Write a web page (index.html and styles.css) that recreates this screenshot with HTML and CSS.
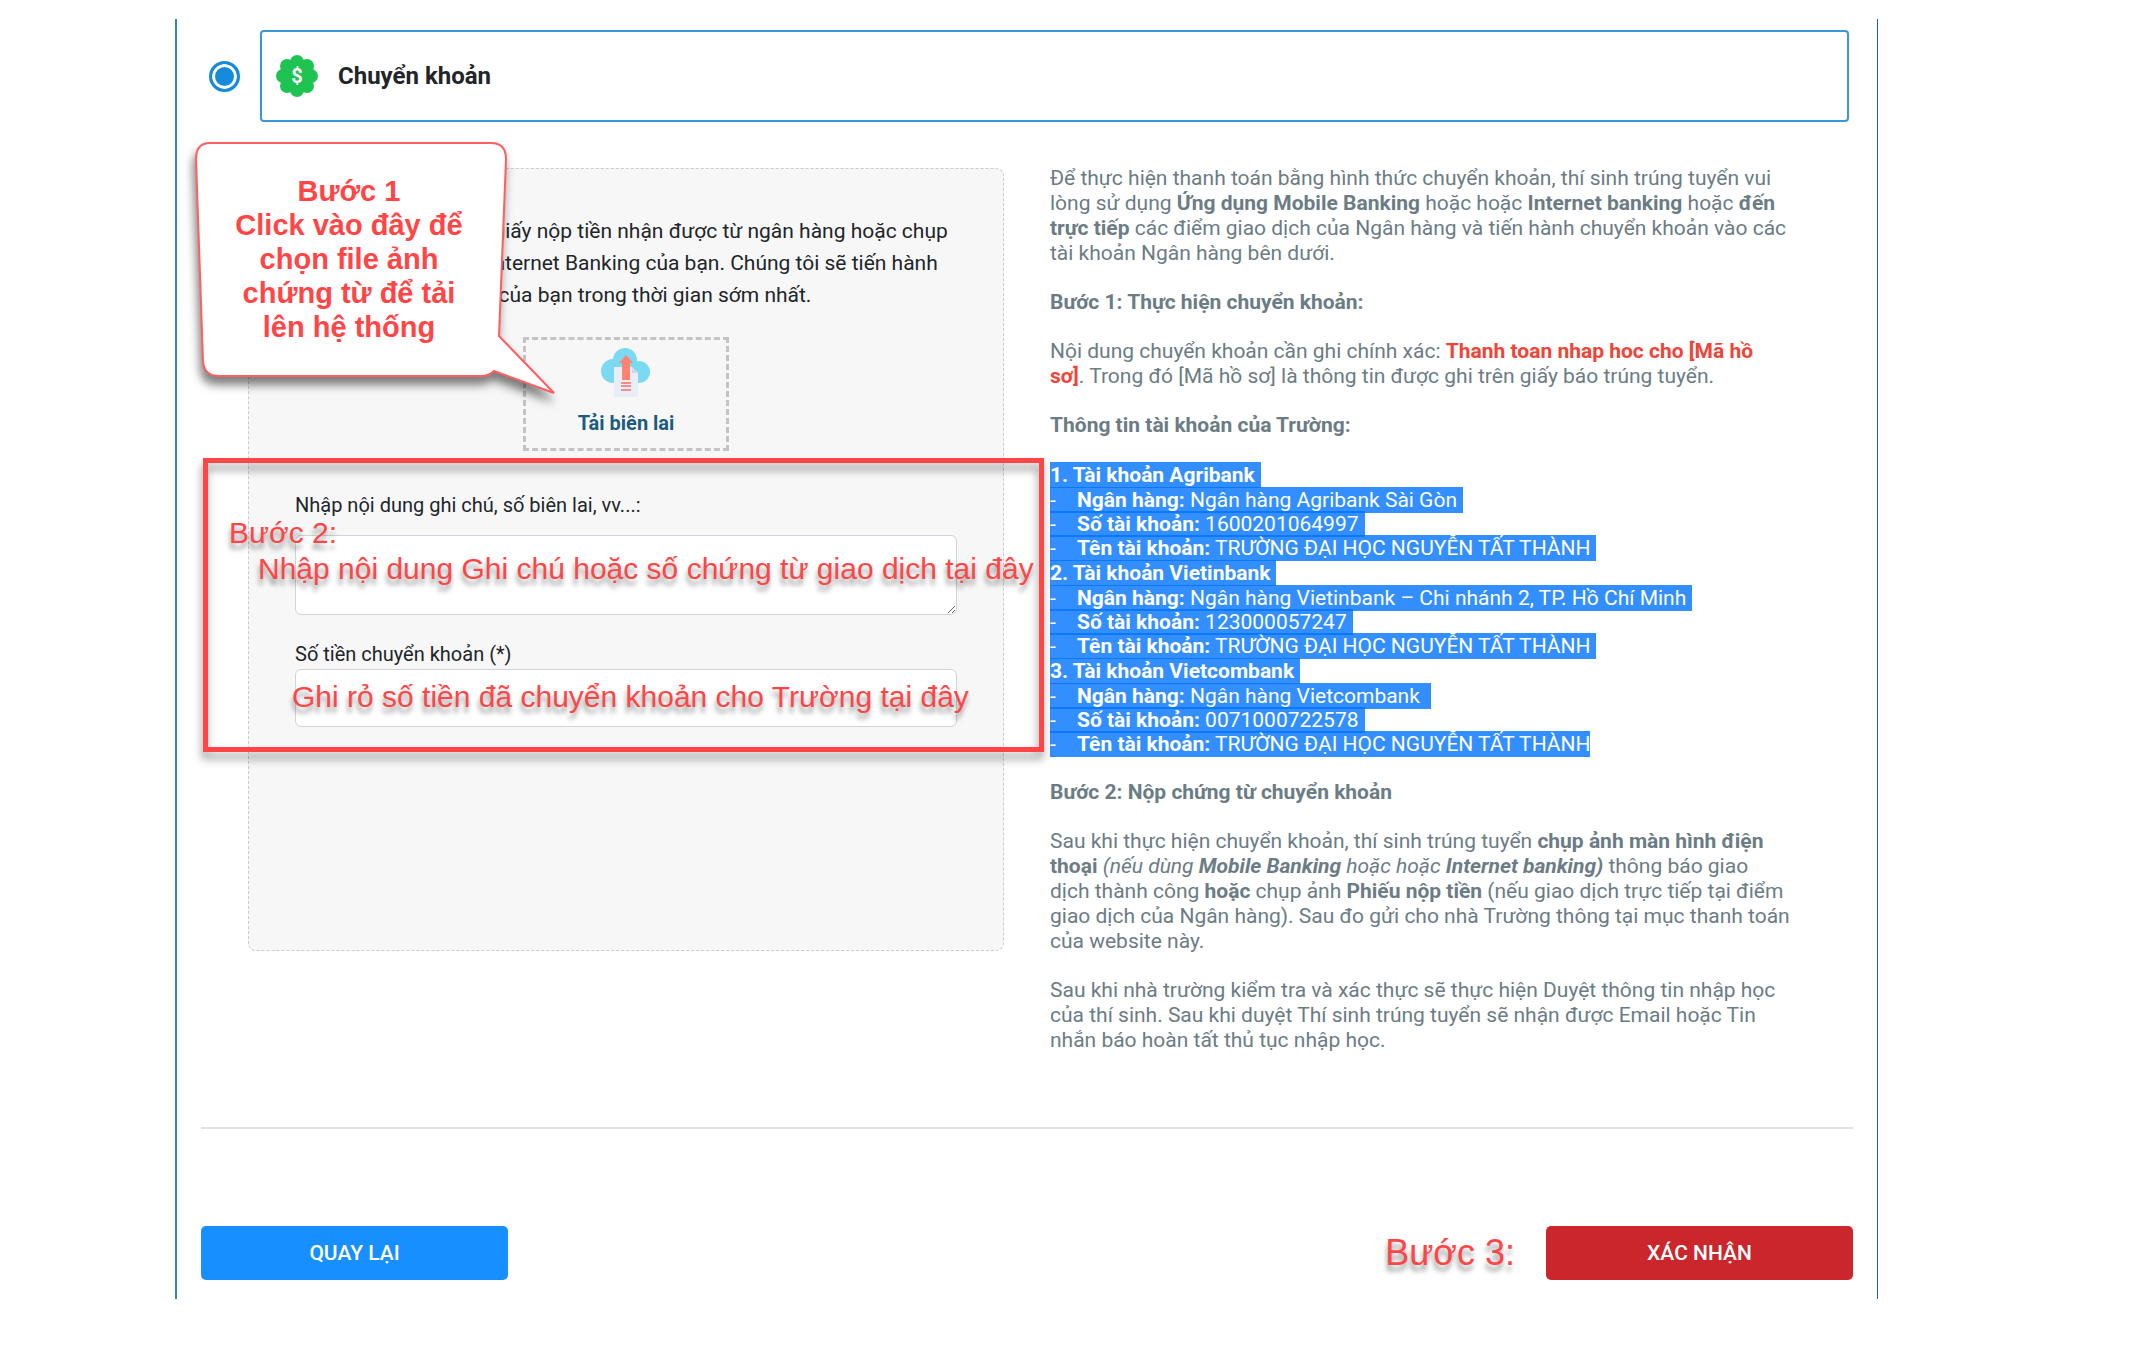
FILE: index.html
```html
<!DOCTYPE html>
<html lang="vi">
<head>
    <meta charset="UTF-8">
    <meta name="viewport" content="width=device-width, initial-scale=1.0">
    <title>Thanh toán chuyển khoản</title>
    <link rel="stylesheet" href="styles.css">
</head>
<body>
    <main class="payment-frame">
        <div class="method-row">
            <input type="radio" class="method-radio" id="transfer" name="method" checked>
            <label class="method-box" for="transfer">
                <svg class="method-icon" viewBox="0 0 42 42" aria-hidden="true">
                    <g fill="#1fc351">
                        <circle cx="21" cy="21" r="17"/>
                        <circle cx="21" cy="7" r="7"/>
                        <circle cx="31" cy="11" r="7"/>
                        <circle cx="35" cy="21" r="7"/>
                        <circle cx="31" cy="31" r="7"/>
                        <circle cx="21" cy="35" r="7"/>
                        <circle cx="11" cy="31" r="7"/>
                        <circle cx="7" cy="21" r="7"/>
                        <circle cx="11" cy="11" r="7"/>
                    </g>
                    <text class="method-sign" x="21" y="28">$</text>
                </svg>
                <span>Chuyển khoản</span>
            </label>
        </div>

        <div class="columns">
            <section class="upload-panel">
                <p class="upload-intro">Vui lòng chụp ảnh lại giấy nộp tiền nhận được từ ngân hàng hoặc chụp<br>toàn bộ màn hình từ Internet Banking của bạn. Chúng tôi sẽ tiến hành<br>duyệt hồ sơ giao dịch của bạn trong thời gian sớm nhất.</p>

                <button type="button" class="upload-btn">
                    <svg class="upload-icon" viewBox="0 0 50 50" aria-hidden="true">
                        <g fill="#7bdaf1">
                            <circle cx="24" cy="13" r="12"/>
                            <circle cx="12" cy="24" r="12"/>
                            <circle cx="38" cy="25" r="11"/>
                            <rect x="12" y="18" width="26" height="18"/>
                        </g>
                        <path d="M13 20h18l6 6v24H13z" fill="#e9edf5"/>
                        <path d="M31 20l6 6h-6z" fill="#cfd6e6"/>
                        <path d="M25 8l7 8h-3v17h-8V16h-3z" fill="#ff8370"/>
                        <path d="M20 36h10M20 39h10M20 43h10" stroke="#ff6f61" stroke-width="1.5"/>
                    </svg>
                    <span>Tải biên lai</span>
                </button>

                <div class="form-group note-group">
                    <label for="note">Nhập nội dung ghi chú, số biên lai, vv...:</label>
                    <textarea id="note"></textarea>
                </div>
                <div class="form-group">
                    <label for="amount">Số tiền chuyển khoản (*)</label>
                    <input type="text" id="amount">
                </div>

                <!-- Guide marks over the form -->
                <div class="callout">
                    <svg class="callout-shape" viewBox="0 0 370 270" aria-hidden="true">
                        <path d="M20 5H301Q316 5 316 21L309 198L364 255L304 233Q299 238 291 238H29Q14 238 13 223L6 21Q6 5 20 5Z" fill="#fff" stroke="#ff5f5f" stroke-width="2"/>
                    </svg>
                    <p class="callout-text">Bước 1<br>Click vào đây để<br>chọn file ảnh<br>chứng từ để tải<br>lên hệ thống</p>
                </div>
                <div class="mark-frame"></div>
                <p class="mark mark-step">Bước 2:</p>
                <p class="mark mark-note">Nhập nội dung Ghi chú hoặc số chứng từ giao dịch tại đây</p>
                <p class="mark mark-amount">Ghi rỏ số tiền đã chuyển khoản cho Trường tại đây</p>
            </section>

            <section class="guide">
                <p>Để thực hiện thanh toán bằng hình thức chuyển khoản, thí sinh trúng tuyển vui lòng sử dụng <b>Ứng dụng Mobile Banking</b> hoặc hoặc <b>Internet banking</b> hoặc <b>đến trực tiếp</b> các điểm giao dịch của Ngân hàng và tiến hành chuyển khoản vào các tài khoản Ngân hàng bên dưới.</p>
                <p><b>Bước 1: Thực hiện chuyển khoản:</b></p>
                <p>Nội dung chuyển khoản cần ghi chính xác: <b class="code">Thanh toan nhap hoc cho [Mã hồ<br>sơ]</b>. Trong đó [Mã hồ sơ] là thông tin được ghi trên giấy báo trúng tuyển.</p>
                <p><b>Thông tin tài khoản của Trường:</b></p>
                <div class="accounts">
                    <h4><span class="hl">1. Tài khoản Agribank</span></h4>
                    <ul>
                        <li><span class="hl"><i class="dash">-</i><b>Ngân hàng:</b> Ngân hàng Agribank Sài Gòn</span></li>
                        <li><span class="hl"><i class="dash">-</i><b>Số tài khoản:</b> 1600201064997</span></li>
                        <li><span class="hl"><i class="dash">-</i><b>Tên tài khoản:</b> TRƯỜNG ĐẠI HỌC NGUYỄN TẤT THÀNH</span></li>
                    </ul>
                    <h4><span class="hl">2. Tài khoản Vietinbank</span></h4>
                    <ul>
                        <li><span class="hl"><i class="dash">-</i><b>Ngân hàng:</b> Ngân hàng Vietinbank – Chi nhánh 2, TP. Hồ Chí Minh</span></li>
                        <li><span class="hl"><i class="dash">-</i><b>Số tài khoản:</b> 123000057247</span></li>
                        <li><span class="hl"><i class="dash">-</i><b>Tên tài khoản:</b> TRƯỜNG ĐẠI HỌC NGUYỄN TẤT THÀNH</span></li>
                    </ul>
                    <h4><span class="hl">3. Tài khoản Vietcombank</span></h4>
                    <ul>
                        <li><span class="hl"><i class="dash">-</i><b>Ngân hàng:</b> Ngân hàng Vietcombank&nbsp;</span></li>
                        <li><span class="hl"><i class="dash">-</i><b>Số tài khoản:</b> 0071000722578</span></li>
                        <li><span class="hl hl-end"><i class="dash">-</i><b>Tên tài khoản:</b> TRƯỜNG ĐẠI HỌC NGUYỄN TẤT THÀNH</span></li>
                    </ul>
                </div>
                <p><b>Bước 2: Nộp chứng từ chuyển khoản</b></p>
                <p>Sau khi thực hiện chuyển khoản, thí sinh trúng tuyển <b>chụp ảnh màn hình điện thoại</b> <i>(nếu dùng <b>Mobile Banking</b> hoặc hoặc <b>Internet banking)</b></i> thông báo giao<br>dịch thành công <b>hoặc</b> chụp ảnh <b>Phiếu nộp tiền</b> (nếu giao dịch trực tiếp tại điểm<br>giao dịch của Ngân hàng). Sau đo gửi cho nhà Trường thông tại mục thanh toán<br>của website này.</p>
                <p>Sau khi nhà trường kiểm tra và xác thực sẽ thực hiện Duyệt thông tin nhập học của thí sinh. Sau khi duyệt Thí sinh trúng tuyển sẽ nhận được Email hoặc Tin nhắn báo hoàn tất thủ tục nhập học.</p>
            </section>
        </div>

        <hr class="divider">

        <div class="actions">
            <button type="button" class="btn btn-back">QUAY LẠI</button>
            <span class="step-three">Bước 3:</span>
            <button type="submit" class="btn btn-confirm">XÁC NHẬN</button>
        </div>
    </main>
</body>
</html>
```
FILE: styles.css
```css
* {
    box-sizing: border-box;
}

body {
    margin: 0;
    background-color: #fff;
    font-family: Roboto, "Noto Sans", sans-serif;
    color: #212529;
}

.payment-frame {
    margin: 19px 256px 47px 175px;
    padding: 11px 24px 19px;
    border-left: 2px solid #3584c2;
    border-right: 1px solid #1763a8;
}

.method-row {
    display: flex;
    align-items: center;
    gap: 20px;
    padding: 0 4px 0 8px;
}

.method-radio {
    appearance: none;
    width: 31px;
    height: 31px;
    margin: 0;
    border: 3px solid #168adb;
    border-radius: 50%;
    background-color: #168adb;
    box-shadow: inset 0 0 0 3px #fff;
}

.method-box {
    flex: 1;
    display: flex;
    align-items: center;
    gap: 20px;
    height: 92px;
    padding: 0 14px;
    border: 2px solid #3a98d9;
    border-radius: 4px;
    font-size: 24px;
    font-weight: 700;
}

.method-icon {
    width: 42px;
    height: 42px;
}

.method-sign {
    font-size: 20px;
    font-weight: 700;
    fill: #fff;
    text-anchor: middle;
}

.columns {
    display: grid;
    grid-template-columns: 1fr 1fr;
    gap: 46px;
    align-items: start;
    padding: 44px 47px 0;
}

.upload-panel {
    position: relative;
    display: flex;
    flex-direction: column;
    min-height: 783px;
    margin-top: 2px;
    padding: 46px 46px 0;
    border: 1px dashed #ccc;
    border-radius: 8px;
    background-color: #f7f7f7;
}

.upload-intro {
    margin: 0 0 26px;
    font-size: 21px;
    line-height: 32px;
    white-space: nowrap;
}

.upload-btn {
    display: flex;
    flex-direction: column;
    align-items: center;
    align-self: center;
    gap: 14px;
    width: 206px;
    height: 114px;
    padding: 7px 0 0;
    border: 3px dashed #c4c4c4;
    background: none;
    font-family: inherit;
    font-size: 20px;
    font-weight: 700;
    line-height: 24px;
    color: #1d5b7c;
}

.upload-icon {
    width: 50px;
    height: 50px;
    flex-shrink: 0;
}

.form-group {
    display: flex;
    flex-direction: column;
}

.form-group label {
    font-size: 20px;
    line-height: 30px;
}

.form-group textarea,
.form-group input {
    width: 100%;
    border: 1px solid #ced4da;
    border-radius: 6px;
    background-color: #fff;
    font-size: 20px;
}

.form-group textarea {
    height: 80px;
}

.form-group input {
    height: 58px;
}

.note-group {
    gap: 15px;
    margin: 39px 0 24px;
}

/* guide marks */
.callout {
    position: absolute;
    top: -31px;
    left: -59px;
    width: 370px;
    height: 270px;
}

.callout-shape {
    width: 100%;
    height: 100%;
    overflow: visible;
    filter: drop-shadow(-2px 8px 5px rgba(0, 0, 0, 0.5));
}

.callout-text {
    position: absolute;
    top: 36px;
    left: 19px;
    width: 280px;
    margin: 0;
    font-family: "Liberation Sans", Arial, sans-serif;
    font-size: 29px;
    font-weight: 700;
    line-height: 34px;
    text-align: center;
    color: #ff4545;
}

.mark-frame {
    position: absolute;
    top: 289px;
    left: -46px;
    right: -41px;
    height: 294px;
    border: 5px solid #ff4545;
    filter: drop-shadow(-1px 7px 4px rgba(0, 0, 0, 0.4));
    pointer-events: none;
}

.mark {
    position: absolute;
    margin: 0;
    font-family: "Liberation Sans", Arial, sans-serif;
    font-size: 30px;
    line-height: 36px;
    white-space: nowrap;
    color: #ff4545;
    text-shadow: -1px 6px 5px rgba(0, 0, 0, 0.4);
    pointer-events: none;
}

.mark-step {
    top: 346px;
    left: -20px;
}

.mark-note {
    top: 382px;
    left: 9px;
}

.mark-amount {
    top: 510px;
    left: 43px;
}

/* right column */
.guide {
    display: flex;
    flex-direction: column;
    gap: 24px;
    font-size: 21px;
    line-height: 25px;
    color: #6b7c85;
}

.guide p {
    margin: 0;
}

.guide .code {
    color: #f04438;
}

.accounts h4 {
    margin: 0;
    font-size: 21px;
    line-height: 25px;
}

.accounts ul {
    margin: 0;
    padding: 0;
    list-style: none;
}

.accounts li {
    line-height: 24px;
}

.accounts li:last-child {
    line-height: 25px;
}

/* selected text, each row reaches a little over the next one */
.accounts .hl {
    display: inline-block;
    margin-bottom: -2px;
    padding-right: 6px;
    background-color: rgba(0, 115, 255, 0.8);
    line-height: 26px;
    color: #fff;
    white-space: nowrap;
    vertical-align: top;
}

.accounts .hl-end {
    padding-right: 0;
}

.dash {
    display: inline-block;
    width: 27px;
    font-style: normal;
}

.divider {
    width: 100%;
    margin: 74px 0 97px;
    border: 0;
    border-top: 2px solid #e2e2e2;
}

.actions {
    display: flex;
    align-items: center;
}

.btn {
    width: 307px;
    height: 54px;
    border: 0;
    border-radius: 5px;
    font-family: inherit;
    font-size: 21px;
    font-weight: 500;
    color: #fff;
}

.btn-back {
    background-color: #188fff;
}

.btn-confirm {
    background-color: #cb262c;
}

.step-three {
    margin: 0 31px 0 auto;
    font-family: "Liberation Sans", Arial, sans-serif;
    font-size: 36px;
    line-height: 40px;
    color: #ff4545;
    text-shadow: -1px 6px 5px rgba(0, 0, 0, 0.4);
}
```
